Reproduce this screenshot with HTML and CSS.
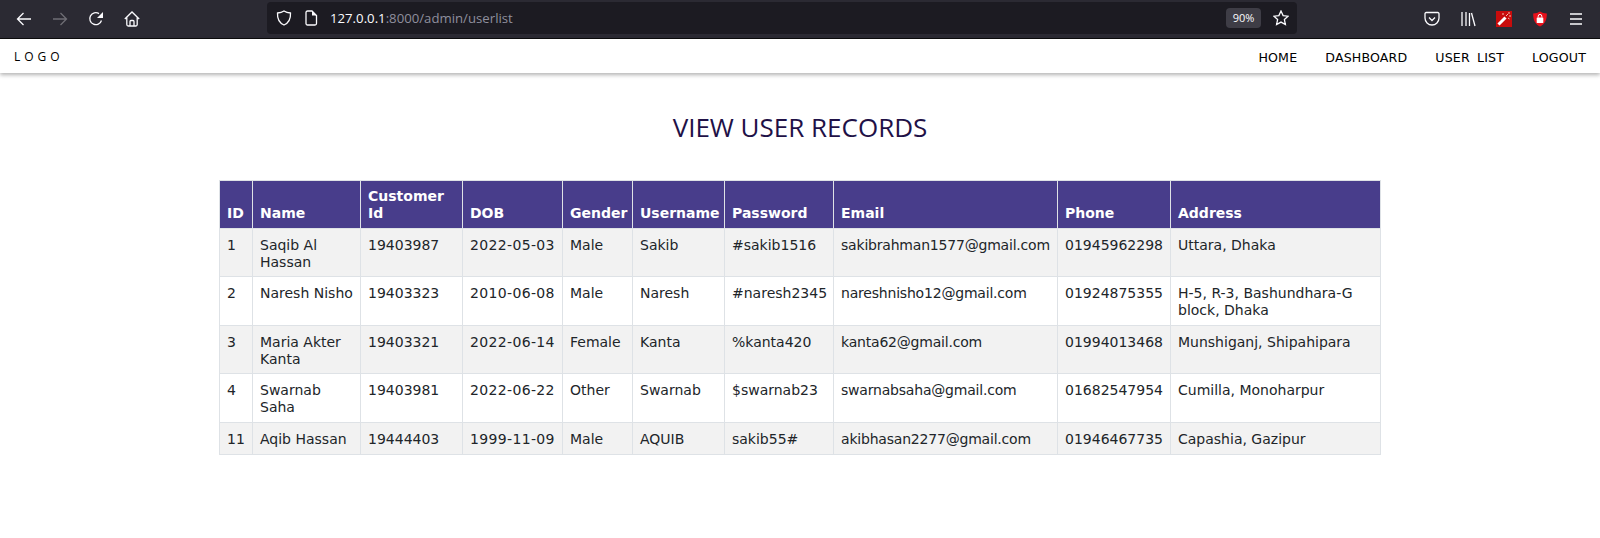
FILE: index.html
```html
<!DOCTYPE html>
<html>
	<head>
		<meta http-equiv="Content-Type" content="text/html; charset=UTF-8">
		<title>User List</title>
		<link rel="stylesheet" href="styles.css">
	</head>
	<body>
		<div class="toolbar">
			<div class="tool-group">
				<svg class="icon" viewBox="0 0 16 16"><path d="M15 8H1.5M7.5 2 1.5 8l6 6"/></svg>
				<svg class="icon dim" viewBox="0 0 16 16"><path d="M1 8h13.5M8.5 2l6 6-6 6"/></svg>
				<svg class="icon" viewBox="0 0 16 16"><path d="M13.5 9.5A6 6 0 1 1 11 2.6"/><path class="solid" d="M15 1v6H9z"/></svg>
				<svg class="icon" viewBox="0 0 16 16"><path d="M.8 8 8 1l7.2 7M2.8 6.500v7a1.500 1.500 0 0 0 1.500 1.500h7.400a1.500 1.500 0 0 0 1.500-1.500v-7M6 15v-4.500a1 1 0 0 1 1-1h2a1 1 0 0 1 1 1V15"/></svg>
			</div>
			<div class="urlbar">
				<svg class="icon" viewBox="0 0 16 16"><path d="M8 1c2 1.300 4 1.800 6.500 2 .3 5.500-1.500 9.800-6.500 12C3 12.800 1.200 8.500 1.500 3 4 2.800 6 2.300 8 1z"/></svg>
				<svg class="icon page" viewBox="0 0 16 16"><path d="M3 2.500A1.500 1.500 0 0 1 4.500 1H9l4.500 4.500v8A1.500 1.500 0 0 1 12 15H4.500A1.500 1.500 0 0 1 3 13.500z"/><path class="solid" d="M9 1l4.500 4.500H9z"/></svg>
				<div class="url"><span class="host">127.0.0.1</span>:8000/admin/userlist</div>
				<div class="zoom-pill">90%</div>
				<svg class="icon star" viewBox="0 0 16 16"><path d="M8 1l2.100 4.600 5 .6-3.700 3.400 1 5L8 12.100 3.600 14.600l1-5L.9 6.200l5-.6z"/></svg>
			</div>
			<div class="tool-group right">
				<svg class="icon" viewBox="0 0 16 16"><path d="M2.200 1.500h11.600A1.200 1.200 0 0 1 15 2.700V7A7 7 0 0 1 1 7V2.700a1.200 1.200 0 0 1 1.200-1.200z"/><path d="M5 6.500l3 3 3-3"/></svg>
				<svg class="icon" viewBox="0 0 16 16"><path d="M2 1v14M6 1v14M9.500 2v13M11.500 2 15 15"/></svg>
				<svg class="ext" viewBox="0 0 16 16"><rect width="16" height="16" fill="#c80c0c"/><path d="M2.500 13.500l7-7" stroke="#fff" stroke-width="3" fill="none"/><path d="M10 5l2-2M13 1v2M15 5h-2M6 3h2M12 7l1.500 1" stroke="#f5c0b0" stroke-width="1" fill="none"/></svg>
				<svg class="ext" viewBox="0 0 16 16"><path d="M8 .5c2 1.300 4 1.800 6.800 2 .2 5.700-1.500 10.400-6.800 13C2.700 12.900 1 8.200 1.200 2.500 4 2.300 6 1.800 8 .5z" fill="#e8101a"/><rect x="4.700" y="6.500" width="6.600" height="5.500" rx=".6" fill="#fff"/><path d="M6.200 6.500V5.200a1.800 1.800 0 0 1 3.600 0v1.300" stroke="#fff" fill="none"/></svg>
				<svg class="icon" viewBox="0 0 16 16"><path d="M2 3h12M2 8h12M2 13h12"/></svg>
			</div>
		</div>

		<div class="navbar">
			<div class="logo">LOGO</div>
			<div class="nav-links">
				<a href="#">HOME</a>
				<a href="#">DASHBOARD</a>
				<a href="#">USER LIST</a>
				<a href="#">LOGOUT</a>
			</div>
		</div>

		<h2 class="page-title">VIEW USER RECORDS</h2>

		<table class="records">
			<colgroup>
				<col class="c-id"><col class="c-name"><col class="c-cust"><col class="c-dob"><col class="c-gender">
				<col class="c-user"><col class="c-pass"><col class="c-email"><col class="c-phone"><col class="c-addr">
			</colgroup>
			<thead>
				<tr>
					<th>ID</th><th>Name</th><th>Customer Id</th><th>DOB</th><th>Gender</th>
					<th>Username</th><th>Password</th><th>Email</th><th>Phone</th><th>Address</th>
				</tr>
			</thead>
			<tbody>
				<tr>
					<td>1</td><td>Saqib Al Hassan</td><td>19403987</td><td class="date">2022-05-03</td><td>Male</td>
					<td>Sakib</td><td>#sakib1516</td><td class="email">sakibrahman1577@gmail.com</td><td>01945962298</td><td>Uttara, Dhaka</td>
				</tr>
				<tr>
					<td>2</td><td>Naresh Nisho</td><td>19403323</td><td class="date">2010-06-08</td><td>Male</td>
					<td>Naresh</td><td>#naresh2345</td><td class="email">nareshnisho12@gmail.com</td><td>01924875355</td><td>H-5, R-3, Bashundhara-G block, Dhaka</td>
				</tr>
				<tr>
					<td>3</td><td>Maria Akter Kanta</td><td>19403321</td><td class="date">2022-06-14</td><td>Female</td>
					<td>Kanta</td><td>%kanta420</td><td class="email">kanta62@gmail.com</td><td>01994013468</td><td>Munshiganj, Shipahipara</td>
				</tr>
				<tr>
					<td>4</td><td>Swarnab Saha</td><td>19403981</td><td class="date">2022-06-22</td><td>Other</td>
					<td>Swarnab</td><td>$swarnab23</td><td class="email">swarnabsaha@gmail.com</td><td>01682547954</td><td>Cumilla, Monoharpur</td>
				</tr>
				<tr>
					<td>11</td><td>Aqib Hassan</td><td>19444403</td><td class="date">1999-11-09</td><td>Male</td>
					<td>AQUIB</td><td>sakib55#</td><td class="email">akibhasan2277@gmail.com</td><td>01946467735</td><td>Capashia, Gazipur</td>
				</tr>
			</tbody>
		</table>
	</body>
</html>
```

FILE: styles.css
```css
html, body {
	margin: 0;
	padding: 0;
}
body {
	background-color: #fff;
	font-family: "DejaVu Sans", sans-serif;
	overflow: hidden;
}

/* browser bar */
.toolbar {
	display: flex;
	align-items: center;
	height: 38px;
	padding-left: 16px;
	background-color: #2b2a33;
	border-bottom: 1px solid #0c0c0d;
}
.tool-group {
	display: flex;
	align-items: center;
	gap: 20px;
}
.tool-group.right {
	margin-left: 127px;
}
.icon {
	width: 16px;
	height: 16px;
	flex: none;
	fill: none;
	stroke: #fbfbfe;
	stroke-width: 1.3;
}
.icon .solid {
	fill: #fbfbfe;
	stroke: none;
}
.icon.dim {
	stroke: #6f6e75;
}
.ext {
	width: 16px;
	height: 16px;
	flex: none;
}
.urlbar {
	display: flex;
	align-items: center;
	width: 1021px;
	height: 32px;
	margin-left: 127px;
	margin-bottom: 2px;
	padding-left: 9px;
	background-color: #1c1b22;
	border-radius: 4px;
}
.icon.page {
	margin-left: 11px;
}
.url {
	flex: 1;
	margin-left: 11px;
	font-family: "Open Sans", sans-serif;
	font-size: 13.200px;
	color: #8f8f9d;
}
.host {
	color: #fbfbfe;
}
.zoom-pill {
	width: 35px;
	height: 20px;
	line-height: 20px;
	text-align: center;
	font-family: "Open Sans", sans-serif;
	font-size: 11px;
	color: #fbfbfe;
	background-color: #3e3d46;
	border-radius: 4px;
}
.icon.star {
	margin-left: 12px;
	margin-right: 8px;
}

/* site nav */
.navbar {
	display: flex;
	align-items: center;
	justify-content: space-between;
	height: 34px;
	padding: 0 14px;
	box-shadow: 0 2px 4px rgba(0, 0, 0, 0.3);
}
.logo {
	font-family: "Open Sans", sans-serif;
	font-size: 12px;
	letter-spacing: 4px;
	color: #000;
}
.nav-links {
	display: flex;
	gap: 28px;
	padding-top: 2px;
}
.nav-links a {
	font-size: 12.600px;
	letter-spacing: 0.150px;
	word-spacing: 3px;
	color: #000;
	text-decoration: none;
}

.page-title {
	margin: 37px 0 36px;
	text-align: center;
	font-family: "Open Sans", sans-serif;
	font-size: 26px;
	line-height: 34px;
	font-weight: 400;
	color: #1f1147;
}

/* table */
.records {
	width: 1161px;
	margin: 0 auto;
	table-layout: fixed;
	border-collapse: collapse;
	font-size: 14px;
	line-height: 17px;
	color: #212529;
}
.c-id { width: 33px; }
.c-name { width: 108px; }
.c-cust { width: 102px; }
.c-dob { width: 100px; }
.c-gender { width: 70px; }
.c-user { width: 92px; }
.c-pass { width: 109px; }
.c-email { width: 224px; }
.c-phone { width: 113px; }
.c-addr { width: 210px; }
.records th,
.records td {
	border: 1px solid #dee2e6;
	padding: 8px 7px 5.500px;
	text-align: left;
	vertical-align: top;
}
.records th {
	vertical-align: bottom;
	padding: 6.500px 7px 6px;
	color: #fff;
	background-color: #483d8b;
	font-weight: 700;
}
.records td.date {
	letter-spacing: 0.350px;
}
.records td.email {
	letter-spacing: -0.200px;
}
.records tbody tr:last-child td {
	padding-bottom: 6.500px;
}
.records tbody tr:nth-child(odd) {
	background-color: #f2f2f2;
}
```
